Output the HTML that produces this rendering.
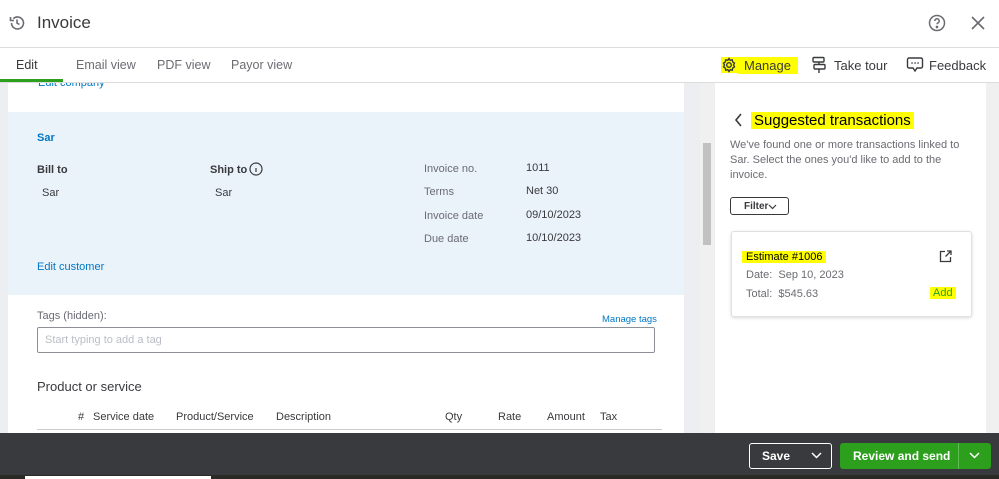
<!DOCTYPE html>
<html><head><style>
*{margin:0;padding:0;box-sizing:border-box}
body{width:999px;height:479px;overflow:hidden;background:#fff;font-family:"Liberation Sans",sans-serif;position:relative;color:#393a3d}
.a{position:absolute;white-space:nowrap}
.hl{background:#ffff00}
</style></head><body>
<svg class="a" style="left:8px;top:14px" width="18" height="18" viewBox="0 0 18 18" fill="none" stroke="#6b6c72" stroke-width="1.6"><path d="M3.5 9a6 6 0 1 0 1.8-4.3"/><path d="M2.5 3v3.5H6"/><path d="M9 5.5V9l2.5 1.5"/></svg>
<div class="a" style="left:37px;top:13px;font-size:17px;color:#393a3d">Invoice</div>
<svg class="a" style="left:927px;top:13px" width="20" height="20" viewBox="0 0 20 20" fill="none" stroke="#6b6c72" stroke-width="1.5"><circle cx="10" cy="10" r="7.5"/><path d="M7.8 8a2.2 2.2 0 1 1 3 2c-.6.3-.8.7-.8 1.3"/><circle cx="10" cy="14" r=".6" fill="#6b6c72"/></svg>
<svg class="a" style="left:971px;top:16px" width="14" height="14" viewBox="0 0 14 14" stroke="#6b6c72" stroke-width="1.6"><path d="M1 1l12 12M13 1L1 13"/></svg>
<div class="a" style="left:0;top:47px;width:999px;height:1px;background:#dcdcdc"></div>
<div class="a" style="left:16px;top:58px;font-size:12.5px;color:#393a3d">Edit</div>
<div class="a" style="left:76px;top:58px;font-size:12.5px;color:#6b6c72">Email view</div>
<div class="a" style="left:157px;top:58px;font-size:12.5px;color:#6b6c72">PDF view</div>
<div class="a" style="left:231px;top:58px;font-size:12.5px;color:#6b6c72">Payor view</div>
<div class="a" style="left:0;top:83px;width:8px;height:350px;background:#eceef1"></div>
<div class="a" style="left:684px;top:83px;width:31px;height:350px;background:#eceef1"></div>
<div class="a" style="left:700px;top:83px;width:14px;height:350px;background:#f0f0f0"></div>
<div class="a" style="left:703px;top:143px;width:8px;height:102px;background:#c1c1c1"></div>
<div class="a" style="left:38px;top:77px;font-size:11px;color:#0077c5">Edit company</div>
<div class="a" style="left:0;top:47px;width:999px;height:36px;background:#fff;border-top:1px solid #dcdcdc;border-bottom:1px solid #dcdcdc;z-index:1"></div>
<div class="a" style="left:16px;top:58px;font-size:12.5px;color:#393a3d;z-index:2">Edit</div>
<div class="a" style="left:76px;top:58px;font-size:12.5px;color:#6b6c72;z-index:2">Email view</div>
<div class="a" style="left:157px;top:58px;font-size:12.5px;color:#6b6c72;z-index:2">PDF view</div>
<div class="a" style="left:231px;top:58px;font-size:12.5px;color:#6b6c72;z-index:2">Payor view</div>
<div class="a" style="left:0;top:79px;width:63px;height:3px;background:#2ca01c;z-index:2"></div>
<svg class="a" style="left:721px;top:57px;z-index:2" width="16" height="16" viewBox="0 0 16 16" fill="none" stroke="#393a3d" stroke-width="1.4"><rect x="0" y="0" width="16" height="16" fill="#ff0" stroke="none"/><circle cx="8" cy="8" r="2.3"/><path d="M8 1.5l1.2 1.8 2.1-.5.4 2.1 1.8 1.2-1 1.9 1 1.9-1.8 1.2-.4 2.1-2.1-.5L8 14.5l-1.2-1.8-2.1.5-.4-2.1L2.5 9.9l1-1.9-1-1.9 1.8-1.2.4-2.1 2.1.5z"/></svg>
<div class="a hl" style="left:737px;top:57px;font-size:13px;padding:1px 7px;color:#393a3d;z-index:2">Manage</div>
<svg class="a" style="left:811px;top:56px;z-index:2" width="16" height="18" viewBox="0 0 16 18" fill="none" stroke="#393a3d" stroke-width="1.4"><rect x="2" y="1.5" width="11" height="4.5" rx="1"/><rect x="3" y="8.5" width="11" height="4.5" rx="1"/><path d="M8 6v2.5M8 13v4"/></svg>
<div class="a" style="left:834px;top:58px;font-size:13px;z-index:2">Take tour</div>
<svg class="a" style="left:906px;top:56px;z-index:2" width="18" height="18" viewBox="0 0 18 18" fill="none" stroke="#393a3d" stroke-width="1.4"><path d="M3 2h12a1.5 1.5 0 0 1 1.5 1.5v7A1.5 1.5 0 0 1 15 12h-4l-2 3-2-3H3a1.5 1.5 0 0 1-1.5-1.5v-7A1.5 1.5 0 0 1 3 2z"/><path d="M6 7h.1M9 7h.1M12 7h.1" stroke-width="1.6" stroke-linecap="round"/></svg>
<div class="a" style="left:929px;top:58px;font-size:13px;z-index:2">Feedback</div>
<div class="a" style="left:8px;top:112px;width:676px;height:183px;background:#eaf3fa"></div>
<div class="a" style="left:37px;top:132px;font-size:11px;font-weight:bold;color:#0077c5">Sar</div>
<div class="a" style="left:37px;top:164px;font-size:11px;font-weight:bold;color:#393a3d">Bill to</div>
<div class="a" style="left:42px;top:187px;font-size:11px">Sar</div>
<div class="a" style="left:210px;top:164px;font-size:11px;font-weight:bold;color:#393a3d">Ship to</div>
<svg class="a" style="left:249px;top:162px" width="14" height="14" viewBox="0 0 14 14" fill="none" stroke="#393a3d" stroke-width="1.2"><circle cx="7" cy="7" r="6"/><path d="M7 6v4M7 4h.01"/></svg>
<div class="a" style="left:215px;top:187px;font-size:11px">Sar</div>
<div class="a" style="left:424px;top:163px;font-size:11px;color:#6b6c72">Invoice no.</div>
<div class="a" style="left:526px;top:162px;font-size:11px">1011</div>
<div class="a" style="left:424px;top:186px;font-size:11px;color:#6b6c72">Terms</div>
<div class="a" style="left:526px;top:185px;font-size:11px">Net 30</div>
<div class="a" style="left:424px;top:210px;font-size:11px;color:#6b6c72">Invoice date</div>
<div class="a" style="left:526px;top:209px;font-size:11px">09/10/2023</div>
<div class="a" style="left:424px;top:233px;font-size:11px;color:#6b6c72">Due date</div>
<div class="a" style="left:526px;top:232px;font-size:11px">10/10/2023</div>
<div class="a" style="left:37px;top:261px;font-size:11px;color:#0077c5">Edit customer</div>
<div class="a" style="left:37px;top:310px;font-size:11px;color:#6b6c72">Tags (hidden):</div>
<div class="a" style="left:602px;top:314px;font-size:9.5px;color:#0077c5">Manage tags</div>
<div class="a" style="left:37px;top:327px;width:618px;height:26px;border:1px solid #8d9096;border-radius:2px"></div>
<div class="a" style="left:45px;top:334px;font-size:11px;color:#babec5">Start typing to add a tag</div>
<div class="a" style="left:37px;top:379px;font-size:13px;color:#393a3d">Product or service</div>
<div class="a" style="left:78px;top:411px;font-size:11px">#</div>
<div class="a" style="left:93px;top:411px;font-size:11px">Service date</div>
<div class="a" style="left:176px;top:411px;font-size:11px">Product/Service</div>
<div class="a" style="left:276px;top:411px;font-size:11px">Description</div>
<div class="a" style="left:445px;top:411px;font-size:11px">Qty</div>
<div class="a" style="left:498px;top:411px;font-size:11px">Rate</div>
<div class="a" style="left:547px;top:411px;font-size:11px">Amount</div>
<div class="a" style="left:600px;top:411px;font-size:11px">Tax</div>
<div class="a" style="left:37px;top:429px;width:625px;height:1px;background:#c9cbcf"></div>
<div class="a" style="left:986px;top:83px;width:13px;height:350px;background:#f0f0f0"></div>
<svg class="a" style="left:734px;top:113px" width="10" height="14" viewBox="0 0 10 14" fill="none" stroke="#393a3d" stroke-width="1.6"><path d="M7 1L2 7l5 6"/></svg>
<div class="a hl" style="left:751px;top:112px;font-size:15px;padding:0 3px;color:#000">Suggested transactions</div>
<div class="a" style="left:730px;top:138px;font-size:11px;line-height:15px;color:#6b6c72;white-space:normal;width:240px">We've found one or more transactions linked to Sar. Select the ones you'd like to add to the invoice.</div>
<div class="a" style="left:730px;top:197px;width:59px;height:18px;border:1px solid #393a3d;border-radius:3px;font-size:10px;font-weight:bold;padding:3px 0 0 13px">Filter</div>
<svg class="a" style="left:768px;top:204px" width="9" height="6" viewBox="0 0 9 6" fill="none" stroke="#393a3d" stroke-width="1.2"><path d="M1 1l3.5 3.5L8 1"/></svg>
<div class="a" style="left:731px;top:231px;width:241px;height:86px;border:1px solid #e0e0e0;border-radius:3px;box-shadow:0 1px 3px rgba(0,0,0,.15)"></div>
<div class="a hl" style="left:742px;top:251px;font-size:11px;padding:0 4px;color:#000">Estimate #1006</div>
<svg class="a" style="left:939px;top:250px" width="13" height="13" viewBox="0 0 13 13" fill="none" stroke="#393a3d" stroke-width="1.3"><path d="M6 1.5H1.5v10h10V7"/><path d="M8 1h4v4M12 1L6.5 6.5"/></svg>
<div class="a" style="left:746px;top:269px;font-size:11px;color:#6b6c72">Date:&nbsp; Sep 10, 2023</div>
<div class="a" style="left:746px;top:288px;font-size:11px;color:#6b6c72">Total:&nbsp; $545.63</div>
<div class="a hl" style="left:930px;top:287px;font-size:11px;padding:0 3px;color:#2ca01c">Add</div>
<div class="a" style="left:0;top:433px;width:999px;height:42px;background:#393a3d"></div>
<div class="a" style="left:0;top:475px;width:999px;height:4px;background:#2b2a27"></div>
<div class="a" style="left:25px;top:476px;width:186px;height:3px;background:#fff"></div>
<div class="a" style="left:749px;top:443px;width:83px;height:26px;border:1px solid #fff;border-radius:3px"></div>
<div class="a" style="left:762px;top:449px;font-size:12px;font-weight:bold;color:#fff">Save</div>
<svg class="a" style="left:811px;top:452px" width="11" height="7" viewBox="0 0 11 7" fill="none" stroke="#fff" stroke-width="1.5"><path d="M1 1l4.5 4.5L10 1"/></svg>
<div class="a" style="left:840px;top:443px;width:151px;height:26px;background:#2ca01c;border-radius:3px"></div>
<div class="a" style="left:958px;top:443px;width:1px;height:26px;background:#5fbc52"></div>
<div class="a" style="left:853px;top:449px;font-size:12px;font-weight:bold;color:#fff">Review and send</div>
<svg class="a" style="left:969px;top:452px" width="11" height="7" viewBox="0 0 11 7" fill="none" stroke="#fff" stroke-width="1.5"><path d="M1 1l4.5 4.5L10 1"/></svg>
</body></html>
